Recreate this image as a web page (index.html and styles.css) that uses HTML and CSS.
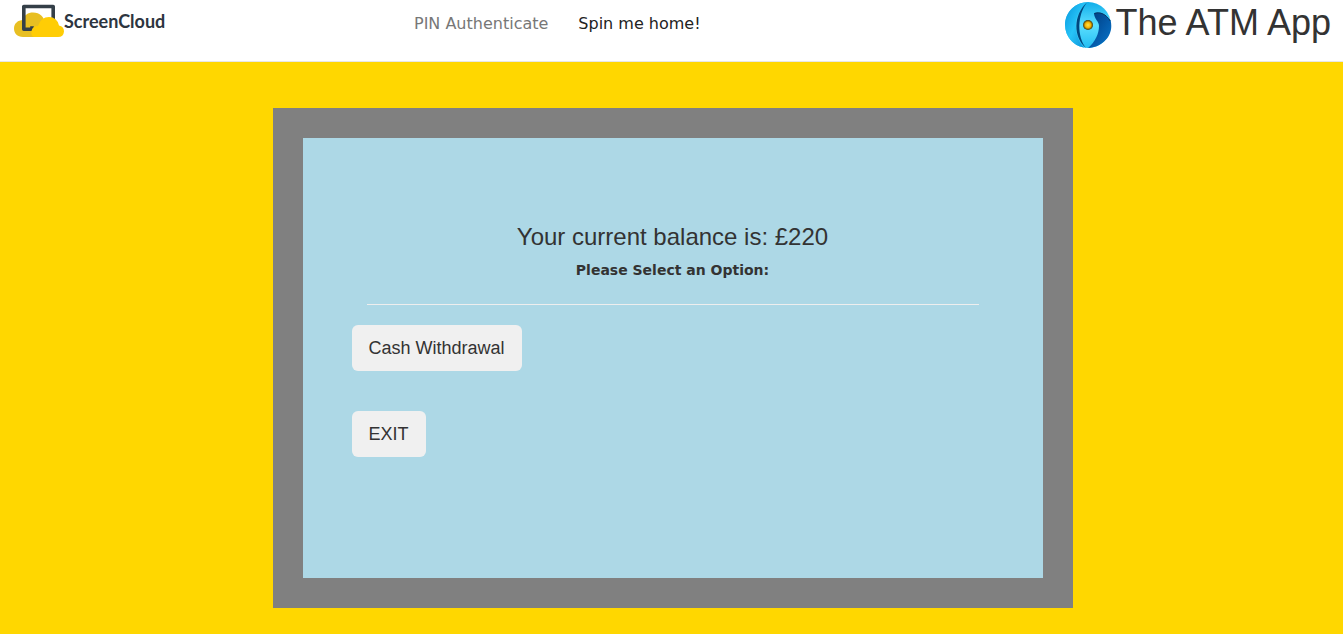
FILE: index.html
```html
<!DOCTYPE html>
<html lang="en">
<head>
<meta charset="utf-8">
<title>The ATM App</title>
<link rel="stylesheet" href="styles.css">
</head>
<body>
<header class="navbar">
  <a class="brand" href="#">
    <svg class="brand-logo" viewBox="0 0 50 34" aria-hidden="true">
      <path fill="#e8bf22" d="M9 33C3 33 0 29 0 24.500C0 19.500 4 16 9 16C10 11 14 8.500 19 8.500C26 8.500 30 13 31 19L28 33Z"/>
      <path fill="none" stroke="#343f48" stroke-width="3.600" stroke-linejoin="round" d="M18 22.200V25.200H9.800V2.500H39.200V17"/>
      <path fill="#ffcd05" d="M20 33Q16.500 32 17.500 27Q18.500 22 24 22Q27 13 35 13Q43 13 45 21.500Q50 22.500 50 27.500Q49.500 33 44 33Z"/>
    </svg>
    <span class="brand-name">ScreenCloud</span>
  </a>
  <nav class="nav">
    <a class="nav-link muted" href="#">PIN Authenticate</a>
    <a class="nav-link" href="#">Spin me home!</a>
  </nav>
  <div class="app-title">
    <svg class="app-logo" viewBox="0 0 48 48" aria-hidden="true">
      <defs>
        <linearGradient id="left" x1="0" y1="0" x2="1" y2="1"><stop offset="0" stop-color="#0795dc"/><stop offset=".5" stop-color="#27c4f8"/><stop offset="1" stop-color="#0a8fd6"/></linearGradient>
        <linearGradient id="mid" x1="0" y1="0" x2="0" y2="1"><stop offset="0" stop-color="#10aeea"/><stop offset=".5" stop-color="#5cdfff"/><stop offset="1" stop-color="#22bdf2"/></linearGradient>
        <linearGradient id="deep" x1="0" y1="0" x2="1" y2="1"><stop offset="0" stop-color="#003a78"/><stop offset=".5" stop-color="#0457a5"/><stop offset="1" stop-color="#0a78cc"/></linearGradient>
        <radialGradient id="core"><stop offset="0" stop-color="#ffe34d"/><stop offset=".55" stop-color="#f8b400"/><stop offset="1" stop-color="#3b3412"/></radialGradient>
      </defs>
      <circle cx="24" cy="24" r="23" fill="url(#mid)"/>
      <path fill="url(#left)" d="M22 1.500C9 13 9 35 20 46.500C9 45 1 35 1 24C1 12 10 2 22 1.500Z"/>
      <path fill="#00477f" d="M23 1.500C9 14 9 36 22 47C13 36 13 14 23 1.500Z"/>
      <path fill="url(#deep)" d="M30 12C36 10 42 13 46.700 20C50 34 39 46 24 47C31 41 35 33 35 25C35 20 30 18 30 12Z"/>
      <path fill="none" stroke="#083463" stroke-width="1" d="M30.500 12.500C36 10.500 42 13 46.300 20"/>
      <circle cx="24" cy="24" r="5" fill="url(#core)"/>
    </svg>
    <h1 class="app-name">The ATM App</h1>
  </div>
</header>
<main class="page">
  <section class="screen">
    <h2 class="balance">Your current balance is: £220</h2>
    <p class="prompt">Please Select an Option:</p>
    <hr class="rule">
    <div class="options">
      <button class="option" type="button">Cash Withdrawal</button>
      <button class="option" type="button">EXIT</button>
    </div>
  </section>
</main>
</body>
</html>
```
FILE: styles.css
```css
* { box-sizing: border-box; }
body {
  margin: 0;
  min-height: 100vh;
  display: flex;
  flex-direction: column;
  background: #ffd700;
  color: #333;
  font-family: "Liberation Sans", Arial, sans-serif;
}
.navbar {
  display: grid;
  grid-template-columns: 400px 1fr auto;
  align-items: start;
  min-height: 62px;
  padding: 0 12px 0 14px;
  background: #fff;
  border-bottom: 1px solid #e7e7e7;
}
.brand {
  display: flex;
  align-items: center;
  padding-top: 4px;
  color: #2d3540;
  text-decoration: none;
}
.brand-logo { width: 50px; height: 34px; }
.brand-name { font: bold 18px/34px Lato, sans-serif; }
.nav {
  display: flex;
  gap: 30px;
  padding-top: 12px;
}
.nav-link {
  color: #222;
  font: 16px/24px "DejaVu Sans", Verdana, sans-serif;
  text-decoration: none;
}
.nav-link.muted { color: #777; }
.app-title { display: flex; gap: 4px; }
.app-logo { width: 48px; height: 48px; margin-top: 1px; }
.app-name {
  margin: 0;
  font-size: 36px;
  font-weight: 400;
  line-height: 46px;
}
.page { padding: 46px 15px 26px 17px; }
.screen {
  max-width: 800px;
  min-height: 500px;
  margin: 0 auto;
  padding: 84px 49px 48px;
  background: #add8e6;
  border: 30px solid #808080;
}
.balance {
  margin: 0;
  font-size: 24px;
  font-weight: 400;
  line-height: 30px;
  text-align: center;
}
.prompt {
  margin: 8px 0 0;
  font: bold 14px/20px "DejaVu Sans", Verdana, sans-serif;
  text-align: center;
}
.rule {
  margin: 24px 15px 20px;
  border: 0;
  border-top: 1px solid #eee;
}
.options {
  display: flex;
  flex-direction: column;
  align-items: flex-start;
  gap: 40px;
}
.option {
  padding: 10px 17px;
  border: 0;
  border-radius: 6px;
  background: #f0f0f0;
  color: #333;
  font: 18px/26px "Liberation Sans", Arial, sans-serif;
}
```
